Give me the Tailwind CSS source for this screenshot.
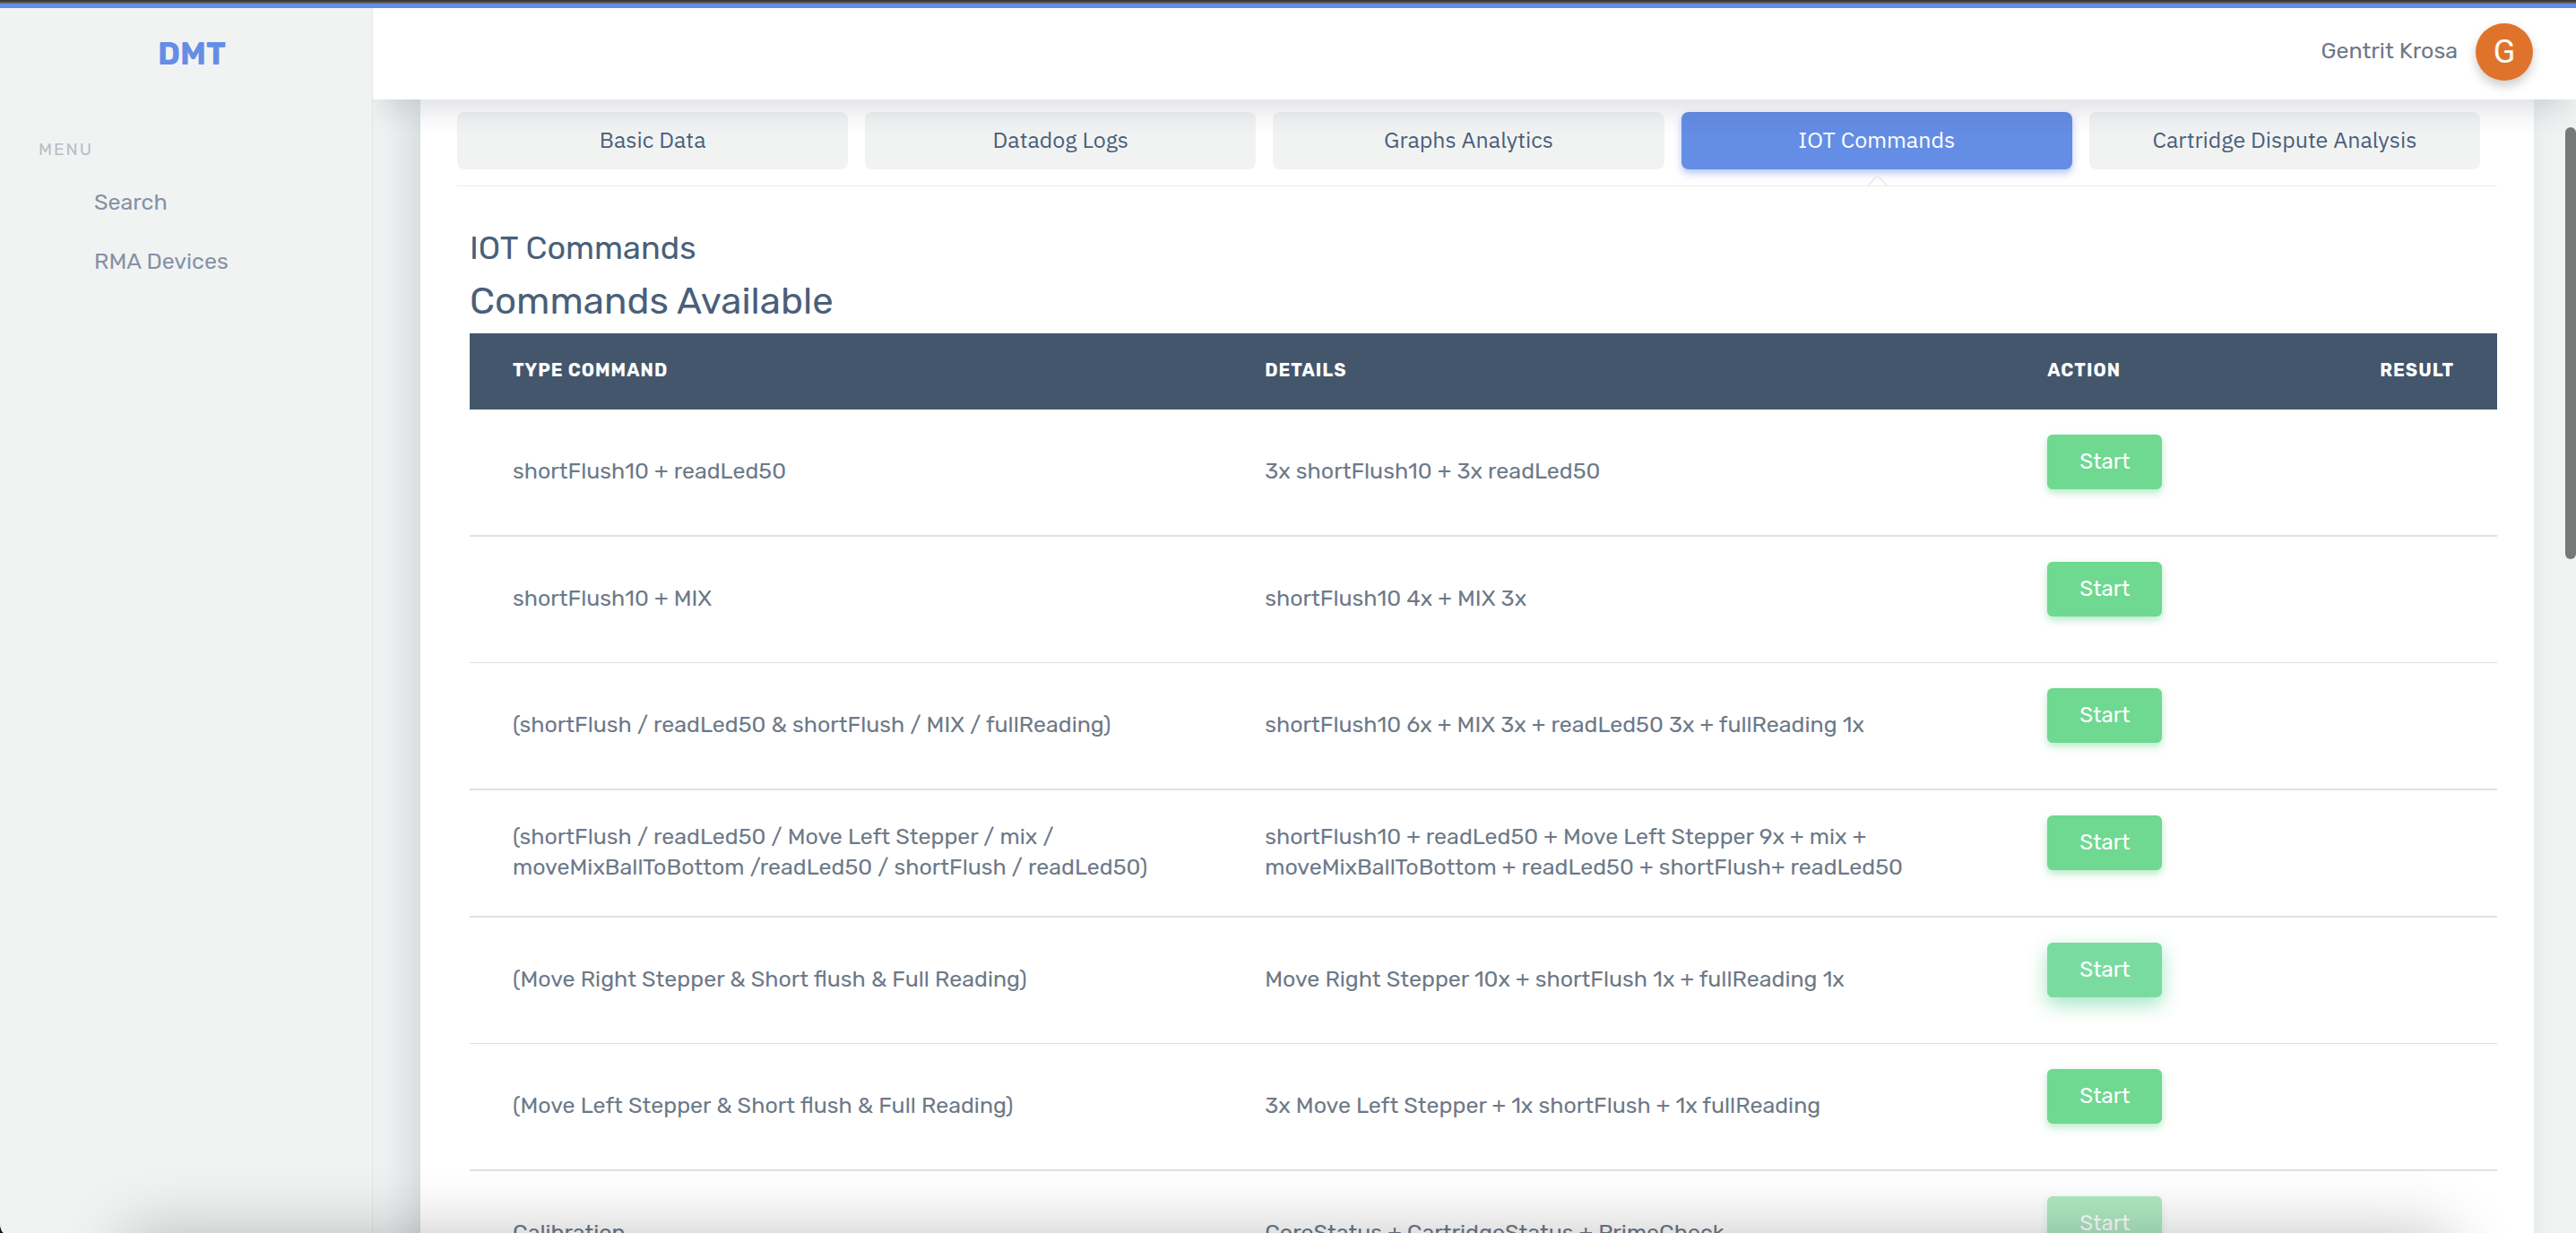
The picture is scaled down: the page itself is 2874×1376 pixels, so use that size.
<!DOCTYPE html>
<html lang="en">
<head>
<meta charset="utf-8">
<title>DMT</title>
<script src="https://cdn.jsdelivr.net/npm/@tailwindcss/browser@4"></script>
</head>
<body class="bg-[#0b1524] font-['Rubik','Roboto',sans-serif] text-[25px] text-[#6d7988]">
<div class="flex h-screen flex-col overflow-hidden bg-[#f1f3f3] [border-bottom-left-radius:5px_12px]">
  <div class="h-[9px] shrink-0 border-t-2 border-[#3a3a3c] bg-[#5f6062] pt-[2px]"><div class="h-[5px] bg-[#648de5]"></div></div>

  <div class="flex min-h-0 flex-1">
    <aside class="z-20 w-[416px] shrink-0 border-r border-[#e3e6e7] bg-[#f1f3f3]">
      <a href="#" class="ml-[176px] mt-[27px] block text-[35px] leading-[48px] font-bold text-[#648de5]">DMT</a>
      <p class="mt-[69px] ml-[43px] text-[19px] leading-7 tracking-[2px] text-[#b8bdc4]">MENU</p>
      <nav class="mt-[28px] flex flex-col gap-8 pl-[105px] leading-[34px] text-[#8492a5]">
        <a href="#">Search</a>
        <a href="#">RMA Devices</a>
      </nav>
    </aside>

    <div class="flex min-w-0 flex-1 flex-col">
      <header class="z-10 flex h-[102px] shrink-0 items-start justify-end bg-white pt-[17px] pr-12 shadow-[0_22px_30px_-10px_rgba(50,55,80,0.16)]">
        <span class="mr-5 leading-[62px]">Gentrit Krosa</span>
        <button type="button" class="size-16 rounded-full bg-[#e0732b] font-['Roboto',sans-serif] text-[36px] leading-[64px] text-white shadow-[0_6px_12px_rgba(0,0,0,0.2)]">G</button>
      </header>

      <main class="min-h-0 flex-1 overflow-hidden pr-[47px] pl-[53px]">
        <section class="bg-white px-[41px] pt-[14px] shadow-[-14px_0_36px_rgba(68,86,108,0.17)]">
          <ul class="grid grid-cols-5 border-b border-[#ebebeb] pb-[18px] font-['IBM_Plex_Sans','Noto_Sans',sans-serif] text-[#4a5f7a] [&_button]:pb-[2px]">
            <li class="pr-[19px]"><button type="button" class="h-16 w-full rounded-lg bg-[#f1f3f3]">Basic Data</button></li>
            <li class="pr-[19px]"><button type="button" class="h-16 w-full rounded-lg bg-[#f1f3f3]">Datadog Logs</button></li>
            <li class="pr-[19px]"><button type="button" class="h-16 w-full rounded-lg bg-[#f1f3f3]">Graphs Analytics</button></li>
            <li class="relative pr-[19px]"><button type="button" class="h-16 w-full rounded-lg bg-[#648de5] text-white shadow-[0_4px_8px_rgba(100,141,229,0.5)]">IOT Commands</button>
              <svg class="absolute inset-x-0 -bottom-[18px] mx-auto h-3 w-[41px] -translate-x-[9px]" viewBox="0 0 41 12" fill="none" stroke="#ebebeb" stroke-width="2"><path d="M10.500 11.500 20.500 1 30.500 11.500"/></svg></li>
            <li class="pr-[19px]"><button type="button" class="h-16 w-full rounded-lg bg-[#f1f3f3]">Cartridge Dispute Analysis</button></li>
          </ul>

          <div class="pl-[14px] text-[#4a5f7a]">
            <h3 class="mt-12 text-[36px] leading-[42px]">IOT Commands</h3>
            <h2 class="mt-[14px] text-[42px] leading-[48px]">Commands Available</h2>
            <table class="mt-3 w-full table-fixed border-separate border-spacing-0 text-left text-[#6d7988]">
              <thead>
                <tr class="h-[85px] bg-[#44566c] text-xl tracking-[1px] text-white [&>th]:px-12 [&>th]:pb-1">
                  <th class="w-[37.1%]">TYPE COMMAND</th><th class="w-[38.6%]">DETAILS</th><th class="w-[16.4%]">ACTION</th><th>RESULT</th>
                </tr>
              </thead>
              <tbody class="leading-[34px] [&_td]:h-[142px] [&_td]:px-12 [&_td]:pb-[2px] [&_td]:border-[#dee2e6] [&_td]:border-b-2 [&_tr:nth-child(3n+2)>td]:h-[141px] [&_tr:nth-child(3n+2)>td]:border-b [&_button]:mb-[22px] [&_button]:block [&_button]:h-[61px] [&_button]:w-32 [&_button]:rounded-md [&_button]:bg-[#6fd891] [&_button]:text-2xl [&_button]:text-white [&_button]:shadow-[0_4px_8px_rgba(111,216,145,0.5)]">
                <tr><td>shortFlush10 + readLed50</td><td>3x shortFlush10 + 3x readLed50</td><td><button type="button">Start</button></td><td></td></tr>
                <tr><td>shortFlush10 + MIX</td><td>shortFlush10 4x + MIX 3x</td><td><button type="button">Start</button></td><td></td></tr>
                <tr><td>(shortFlush / readLed50 &amp; shortFlush / MIX / fullReading)</td><td>shortFlush10 6x + MIX 3x + readLed50 3x + fullReading 1x</td><td><button type="button">Start</button></td><td></td></tr>
                <tr><td>(shortFlush / readLed50 / Move Left Stepper / mix /<br>moveMixBallToBottom /readLed50 / shortFlush / readLed50)</td><td>shortFlush10 + readLed50 + Move Left Stepper 9x + mix +<br>moveMixBallToBottom + readLed50 + shortFlush+ readLed50</td><td><button type="button">Start</button></td><td></td></tr>
                <tr><td>(Move Right Stepper &amp; Short flush &amp; Full Reading)</td><td>Move Right Stepper 10x + shortFlush 1x + fullReading 1x</td><td><button type="button" class="bg-[#7adba0]! shadow-[0_8px_22px_rgba(111,216,165,0.65)]!">Start</button></td><td></td></tr>
                <tr><td>(Move Left Stepper &amp; Short flush &amp; Full Reading)</td><td>3x Move Left Stepper + 1x shortFlush + 1x fullReading</td><td><button type="button">Start</button></td><td></td></tr>
                <tr><td>Calibration</td><td>CoreStatus + CartridgeStatus + PrimeCheck</td><td><button type="button" disabled class="opacity-55">Start</button></td><td></td></tr>
              </tbody>
            </table>
          </div>
        </section>
      </main>
    </div>
  </div>
</div>
<div class="fixed top-[142px] right-0 z-30 h-[35vh] w-3 rounded-full bg-[#777977]"></div>
<div class="pointer-events-none fixed inset-x-[140px] top-full z-30 h-[100px] shadow-[0_0_72px_rgba(0,0,0,0.24)]"></div>
</body>
</html>
